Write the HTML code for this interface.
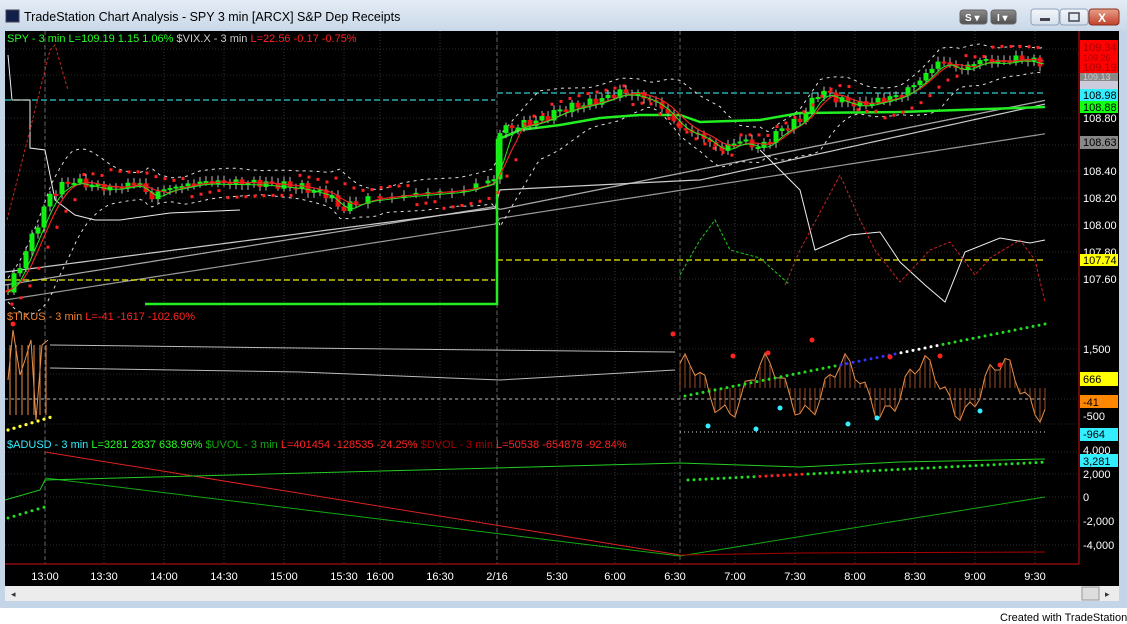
<!DOCTYPE html>
<html><head><meta charset="utf-8"><style>
body{margin:0;width:1127px;height:624px;overflow:hidden;background:#fff;font-family:"Liberation Sans",sans-serif}
svg{display:block}
</style></head><body>
<svg id="s" width="1127" height="624" xmlns="http://www.w3.org/2000/svg" font-family="Liberation Sans, sans-serif">
<defs>
<linearGradient id="tb" x1="0" y1="0" x2="0" y2="1"><stop offset="0" stop-color="#e4ecf5"/><stop offset="1" stop-color="#c9d8e8"/></linearGradient>
<linearGradient id="cl" x1="0" y1="0" x2="0" y2="1"><stop offset="0" stop-color="#e8a08a"/><stop offset="1" stop-color="#c2402a"/></linearGradient>
<linearGradient id="bt" x1="0" y1="0" x2="0" y2="1"><stop offset="0" stop-color="#f3f6fa"/><stop offset="1" stop-color="#d5dfea"/></linearGradient>
<linearGradient id="db" x1="0" y1="0" x2="0" y2="1"><stop offset="0" stop-color="#8a8a8a"/><stop offset="1" stop-color="#505050"/></linearGradient>
</defs>
<rect width="1127" height="608" fill="#c4d5e8"/>
<rect x="0" y="0" width="1127" height="31" fill="url(#tb)"/>
<rect x="6" y="10" width="13" height="12" fill="#10204a" stroke="#445" stroke-width="1"/>
<text x="24" y="21" font-size="12.5" fill="#000">TradeStation Chart Analysis - SPY 3 min [ARCX] S&amp;P Dep Receipts</text>
<rect x="960" y="10" width="27" height="14" rx="3" fill="url(#db)" stroke="#666"/><text x="965" y="21" font-size="10" font-weight="bold" fill="#fff">S ▾</text>
<rect x="991" y="10" width="25" height="14" rx="3" fill="url(#db)" stroke="#666"/><text x="997" y="21" font-size="10" font-weight="bold" fill="#fff">I ▾</text>
<rect x="1031" y="9" width="28" height="16" rx="3" fill="url(#bt)" stroke="#8ea3bd"/><rect x="1040" y="18" width="10" height="3" fill="#445"/>
<rect x="1060" y="9" width="28" height="16" rx="3" fill="url(#bt)" stroke="#8ea3bd"/><rect x="1069" y="13" width="10" height="8" fill="none" stroke="#445" stroke-width="1.5"/>
<rect x="1089" y="9" width="30" height="16" rx="3" fill="url(#cl)" stroke="#8a3020"/><text x="1098" y="22" font-size="12" font-weight="bold" fill="#fff">X</text>
<rect x="5" y="31" width="1114" height="555" fill="#000"/>
<rect x="5" y="586" width="1114" height="15" fill="#ececec"/>
<text x="11" y="597" font-size="9" fill="#333">◂</text>
<rect x="1082" y="587" width="17" height="13" fill="#ddd" stroke="#999"/><text x="1105" y="597" font-size="9" fill="#333">▸</text>
<rect x="0" y="608" width="1127" height="16" fill="#fff"/>
<text x="1000" y="621" font-size="11" fill="#000">Created with TradeStation</text>
<g id="grid"></g>
<g id="dyn"></g>
<line x1="1079" y1="31" x2="1079" y2="564" stroke="#d01010"/>
<line x1="5" y1="564" x2="1079" y2="564" stroke="#d01010"/>
<g font-size="11" fill="#fff">
<text x="45" y="580" text-anchor="middle">13:00</text><text x="104" y="580" text-anchor="middle">13:30</text><text x="164" y="580" text-anchor="middle">14:00</text><text x="224" y="580" text-anchor="middle">14:30</text><text x="284" y="580" text-anchor="middle">15:00</text><text x="344" y="580" text-anchor="middle">15:30</text><text x="380" y="580" text-anchor="middle">16:00</text><text x="440" y="580" text-anchor="middle">16:30</text><text x="497" y="580" text-anchor="middle">2/16</text><text x="557" y="580" text-anchor="middle">5:30</text><text x="615" y="580" text-anchor="middle">6:00</text><text x="675" y="580" text-anchor="middle">6:30</text><text x="735" y="580" text-anchor="middle">7:00</text><text x="795" y="580" text-anchor="middle">7:30</text><text x="855" y="580" text-anchor="middle">8:00</text><text x="915" y="580" text-anchor="middle">8:30</text><text x="975" y="580" text-anchor="middle">9:00</text><text x="1035" y="580" text-anchor="middle">9:30</text>
</g>
<g font-size="11">
<rect x="1080" y="40" width="38" height="33" fill="#f00"/>
<text x="1083" y="51" fill="#a00">109.34</text><text x="1083" y="61" fill="#a00" font-size="9">109.26</text><text x="1083" y="71" fill="#a00">109.19</text>
<rect x="1080" y="73" width="38" height="8" fill="#888"/><text x="1083" y="80" fill="#ccc" font-size="9">109.13</text>
<rect x="1080" y="81" width="38" height="8" fill="#ccd"/>
<rect x="1080" y="89" width="38" height="12" fill="#3ef"/><text x="1083" y="99" fill="#000">108.98</text>
<rect x="1080" y="101" width="38" height="12" fill="#1f1"/><text x="1083" y="111" fill="#000">108.88</text>
<text x="1083" y="122" fill="#fff">108.80</text>
<rect x="1080" y="136" width="38" height="13" fill="#888"/><text x="1083" y="146" fill="#000">108.63</text>
<text x="1083" y="175" fill="#fff">108.40</text><text x="1083" y="202" fill="#fff">108.20</text><text x="1083" y="229" fill="#fff">108.00</text><text x="1083" y="256" fill="#fff">107.80</text>
<rect x="1080" y="254" width="38" height="12" fill="#ff0"/><text x="1083" y="264" fill="#000">107.74</text>
<text x="1083" y="283" fill="#fff">107.60</text>
<text x="1083" y="353" fill="#fff">1,500</text>
<rect x="1080" y="372" width="38" height="14" fill="#ff0"/><text x="1083" y="383" fill="#000">666</text>
<rect x="1080" y="395" width="38" height="13" fill="#f80"/><text x="1083" y="406" fill="#000">-41</text>
<text x="1083" y="420" fill="#fff">-500</text>
<rect x="1080" y="428" width="38" height="13" fill="#3ef"/><text x="1083" y="438" fill="#000">-964</text>
<text x="1083" y="454" fill="#fff">4,000</text>
<rect x="1080" y="454" width="38" height="13" fill="#3ef"/><text x="1083" y="465" fill="#000">3,281</text>
<text x="1083" y="478" fill="#fff">2,000</text><text x="1083" y="501" fill="#fff">0</text><text x="1083" y="525" fill="#fff">-2,000</text><text x="1083" y="549" fill="#fff">-4,000</text>
</g>
<g font-size="11">
<text x="7" y="42"><tspan fill="#2f2">SPY - 3 min  L=109.19  1.15  1.06%</tspan><tspan fill="#ccc">  $VIX.X - 3 min  </tspan><tspan fill="#f22">L=22.56  -0.17  -0.75%</tspan></text>
<text x="7" y="320"><tspan fill="#f08030">$TIKUS - 3 min  </tspan><tspan fill="#f22">L=-41    -1617  -102.60%</tspan></text>
<text x="7" y="448"><tspan fill="#3ef">$ADUSD - 3 min  </tspan><tspan fill="#2f2">L=3281  2837  638.96%  </tspan><tspan fill="#1a1">$UVOL - 3 min  </tspan><tspan fill="#f22">L=401454  -128535  -24.25%  </tspan><tspan fill="#a00">$DVOL - 3 min  </tspan><tspan fill="#f22">L=50538  -654878  -92.84%</tspan></text>
</g>
</svg>
<script>
(function(){
var NS="http://www.w3.org/2000/svg";
var g=document.getElementById("dyn"),gr=document.getElementById("grid");
function el(p,t,a){var e=document.createElementNS(NS,t);for(var k in a)e.setAttribute(k,a[k]);p.appendChild(e);return e;}
function pl(p,pts,c,w,d){var a={points:pts.map(function(q){return q[0]+","+q[1]}).join(" "),fill:"none",stroke:c,"stroke-width":w||1};if(d)a["stroke-dasharray"]=d;return el(p,"polyline",a);}
[45,104,164,224,284,344,380,440,497,557,615,675,735,795,855,915,975,1035].forEach(function(x){el(gr,"line",{x1:x,y1:31,x2:x,y2:564,stroke:"#333","stroke-dasharray":"1,2"});});
[49,75,118,145,171,198,225,252,279,349,374,399,424,452,474,497,521,545].forEach(function(y){el(gr,"line",{x1:5,y1:y,x2:1079,y2:y,stroke:"#2a2a2a","stroke-dasharray":"1,2"});});
el(gr,"line",{x1:45,y1:31,x2:45,y2:564,stroke:"#666","stroke-dasharray":"4,3"});
el(gr,"line",{x1:497,y1:31,x2:497,y2:564,stroke:"#666","stroke-dasharray":"4,3"});
el(gr,"line",{x1:680,y1:31,x2:680,y2:564,stroke:"#666","stroke-dasharray":"4,3"});
var K=[[8,290],[20,265],[35,230],[50,195],[70,180],[90,185],[110,188],[140,183],[150,200],[160,190],[200,182],[260,183],[300,187],[330,195],[340,210],[360,200],[400,195],[460,190],[495,180],[500,130],[520,125],[540,120],[560,110],[580,105],[600,100],[620,92],[640,95],[660,105],[680,128],[700,135],[720,150],[740,140],[760,148],[780,130],[800,120],[820,90],[840,100],[860,105],[880,100],[900,95],[920,80],[940,60],[960,70],[980,60],[1000,62],[1020,58],[1045,64]];
function P(x){if(x<=K[0][0])return K[0][1];for(var i=1;i<K.length;i++){if(x<=K[i][0]){var a=K[i-1],b=K[i];return a[1]+(b[1]-a[1])*(x-a[0])/(b[0]-a[0]);}}return K[K.length-1][1];}
function S(x,n){var s=0,c=0;for(var i=-n;i<=0;i+=3){s+=P(x+i);c++;}return s/c;}
var a1=[],a2=[],a3=[];for(var x=5;x<=1045;x+=5){a1.push([x,300-(x-5)*0.155-(x>497?5:0)]);a2.push([x,x<497?285-(x-5)*0.16:210-(x-497)*0.2]);a3.push([x,x<497?272-(x-5)*0.13:(x<700?190-(x-497)*0.05:180-(x-700)*0.22)]);}
pl(g,a1,"#999",1.2);pl(g,a2,"#aaa",1.2);pl(g,a3,"#ccc",1.2);
pl(g,[[5,100],[495,100]],"#3cc",1.2,"6,3");pl(g,[[497,93],[1045,93]],"#3cc",1.2,"6,3");
pl(g,[[5,280],[495,280]],"#ee0",1.2,"6,3");pl(g,[[497,260],[1045,260]],"#ee0",1.2,"6,3");
var ub=[],lb=[],rm=[],gm=[];
for(var x=8;x<=1045;x+=4){var m=S(x,40);var w=12+Math.abs(P(x)-S(x,90))*0.6;ub.push([x,m-w]);lb.push([x,m+w]);rm.push([x,S(x,24)]);gm.push([x,S(x,15)+2]);}
pl(g,ub,"#ddd",1,"3,4");pl(g,lb,"#ddd",1,"3,4");
pl(g,[[145,304],[494,304],[497,304],[497,140],[520,130],[560,125],[600,118],[640,115],[680,115],[700,122],[760,120],[800,113],[900,112],[1045,107]],"#2e2",2.5);
pl(g,[[8,55],[12,100],[30,100],[30,148],[45,150],[55,200],[75,215],[95,220],[120,220],[170,213],[240,210]],"#eee",1);
pl(g,[[760,150],[800,190],[815,250],[850,235],[880,232],[900,262],[925,285],[945,302],[965,252],[1000,238],[1030,243],[1045,240]],"#eee",1);
pl(g,[[7,220],[30,130],[50,50],[55,45],[65,80],[68,90]],"#c22",1,"3,2");
pl(g,[[785,285],[800,250],[840,175],[860,220],[875,250],[900,282],[930,250],[950,242],[975,275],[990,258],[1020,240],[1035,260],[1045,302]],"#c22",1,"3,2");
pl(g,[[680,275],[700,240],[715,220],[730,250],[760,258],[790,285]],"#2c2",1,"3,2");
var prev=P(5);
for(var x=8;x<=1045;x+=6){if(x>350&&x<494&&(x/6)%2<1)continue;var c=P(x)+Math.sin(x*1.7)*2.5+Math.sin(x*0.37)*2;var o=prev;var top=Math.min(o,c),bot=Math.max(o,c);if(bot-top<2)bot=top+2;
el(g,"line",{x1:x,y1:top-2-Math.abs(Math.sin(x))*3,x2:x,y2:bot+2+Math.abs(Math.cos(x))*3,stroke:"#bbb"});
el(g,"rect",{x:x-2.5,y:top,width:5,height:bot-top,fill:c<o?"#1e1":"#e11"});prev=c;}
pl(g,rm,"#e22",1.2);pl(g,gm,"#2e2",1);
for(var x=12;x<=1045;x+=9){var side=(Math.floor((x+30)/110)%2)?-1:1;var y=S(x,30)+side*(16+((x%110)/110)*-8);el(g,"rect",{x:x-1.5,y:y-1.5,width:3,height:3,fill:"#f22"});}
pl(g,[[50,345],[300,348],[675,352]],"#bbb",1);pl(g,[[50,368],[300,372],[500,380],[675,370]],"#bbb",1);
pl(g,[[5,399],[1045,399]],"#bbb",1,"3,3");pl(g,[[680,432],[1045,432]],"#ddd",1,"1,3");
var tk=[[8,380],[13,330],[20,375],[25,360],[31,340],[36,420],[42,345],[48,340]];
pl(g,tk,"#e8904a",1);
for(var x=10;x<=48;x+=6)el(g,"line",{x1:x,y1:345,x2:x,y2:415,stroke:"#e8904a"});
var tk2=[];for(var x=680;x<=1045;x+=5){var ph=Math.sin(x*0.08)*26+Math.sin(x*0.31)*9;tk2.push([x,388+ph]);}
pl(g,tk2,"#e8904a",1);for(var i=0;i<tk2.length;i++)el(g,"line",{x1:tk2[i][0],y1:388,x2:tk2[i][0],y2:tk2[i][1],stroke:"#c06030","stroke-width":0.8});
for(var x=8;x<=50;x+=6)el(g,"circle",{cx:x,cy:430-(x-8)*0.3,r:1.6,fill:"#ff3"});
el(g,"circle",{cx:13,cy:324,r:2.5,fill:"#f22"});
for(var x=685;x<=1045;x+=6){el(g,"circle",{cx:x,cy:396-(x-685)*0.2,r:1.5,fill:x>840&&x<900?"#33f":(x>880&&x<940?"#fff":"#2d2")});}
[[673,334],[733,356],[768,353],[812,340],[890,357],[940,356],[1000,365]].forEach(function(p){el(g,"circle",{cx:p[0],cy:p[1],r:2.5,fill:"#f22"});});
[[708,426],[756,429],[780,408],[848,424],[877,418],[980,411]].forEach(function(p){el(g,"circle",{cx:p[0],cy:p[1],r:2.5,fill:"#3ef"});});
pl(g,[[45,452],[680,555]],"#d22",1);pl(g,[[45,478],[680,556],[1045,497]],"#1a1",1);
pl(g,[[5,500],[40,490],[45,480],[680,463],[800,467],[900,462],[1045,459]],"#2c2",1);
pl(g,[[680,555],[800,553],[1045,552]],"#a00",1);
for(var x=8;x<=45;x+=6)el(g,"circle",{cx:x,cy:518-(x-8)*0.3,r:1.5,fill:"#2d2"});
for(var x=688;x<=1045;x+=6)el(g,"circle",{cx:x,cy:480-(x-688)*0.05,r:1.5,fill:(x>755&&x<805)?"#f22":"#2d2"});
})();
</script>
</body></html>
